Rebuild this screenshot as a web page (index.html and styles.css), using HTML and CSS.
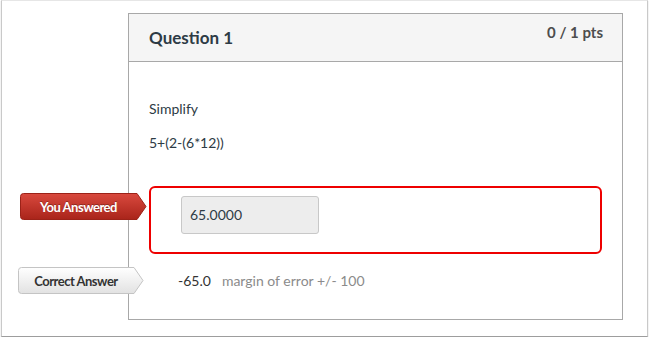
FILE: index.html
```html
<!DOCTYPE html>
<html>
<head>
    <title>Question 1</title>
    <link rel="stylesheet" href="styles.css">
</head>
<body>
    <div class="frame">
        <div class="question">
            <div class="question-header">
                <h2 class="question-title">Question 1</h2>
                <div class="question-points">0 / 1 pts</div>
            </div>
            <div class="question-body">
                <div class="question-text">
                    <p>Simplify</p>
                    <p>5+(2-(6*12))</p>
                </div>

                <div class="answer answer-wrong">
                    <div class="tag tag-red">
                        <svg class="tag-shape" width="127" height="27" viewBox="0 0 127 27">
                            <defs>
                                <linearGradient id="redGrad" x1="0" y1="0" x2="0" y2="1">
                                    <stop offset="0" stop-color="#d9493e"/>
                                    <stop offset="1" stop-color="#a9241a"/>
                                </linearGradient>
                            </defs>
                            <path d="M3.5 0.5 H117 L126 13.5 L117 26.5 H3.5 Q0.5 26.5 0.5 23.5 V3.5 Q0.5 0.5 3.5 0.5 Z" fill="url(#redGrad)" stroke="#9c2218"/>
                        </svg>
                        <span class="tag-label">You Answered</span>
                    </div>
                    <div class="answer-input">65.0000</div>
                </div>

                <div class="answer answer-correct">
                    <div class="tag tag-gray">
                        <svg class="tag-shape" width="126" height="27" viewBox="0 0 126 27">
                            <defs>
                                <linearGradient id="grayGrad" x1="0" y1="0" x2="0" y2="1">
                                    <stop offset="0" stop-color="#ffffff"/>
                                    <stop offset="1" stop-color="#e2e2e2"/>
                                </linearGradient>
                            </defs>
                            <path d="M3.5 0.5 H116 L125 13.5 L116 26.5 H3.5 Q0.5 26.5 0.5 23.5 V3.5 Q0.5 0.5 3.5 0.5 Z" fill="url(#grayGrad)" stroke="#c4c4c4"/>
                        </svg>
                        <span class="tag-label">Correct Answer</span>
                    </div>
                    <span class="answer-value">-65.0</span>
                    <span class="answer-margin">margin of error +/- 100</span>
                </div>
            </div>
        </div>
    </div>
</body>
</html>
```

FILE: styles.css
```css
body {
    font-family: Lato, "Open Sans", sans-serif;
    background-color: #fff;
    margin: 0;
    padding: 0;
    color: #2d3b45;
}

.frame {
    width: 645px;
    height: 335px;
    margin-left: 1px;
    border: 1px solid #c9c9c9;
    border-top-color: #e6e6e6;
    border-bottom-color: #9d9d9d;
    box-shadow: 0 1px 1px rgba(0, 0, 0, 0.25);
    background: #fff;
}

.question {
    width: 493px;
    margin: 12px 0 0 126px;
    border: 1px solid #a8a8a8;
}

.question-header {
    display: flex;
    justify-content: space-between;
    align-items: flex-start;
    height: 47px;
    padding: 0 19px 0 20px;
    background: #f5f5f5;
    border-bottom: 1px solid #a8a8a8;
}

.question-title {
    margin: 13px 0 0;
    font-size: 17px;
    font-weight: bold;
    line-height: 21px;
    color: #2d3b45;
}

.question-points {
    margin-top: 9px;
    font-size: 15px;
    font-weight: bold;
    line-height: 18px;
    color: #4d4d4d;
}

.question-body {
    padding: 37px 20px 25px 20px;
}

.question-text p {
    margin: 0 0 14px;
    font-size: 14px;
    line-height: 20px;
}

.question-text p:last-child {
    margin-bottom: 0;
}

.question-text {
    margin-bottom: 33px;
}

.answer {
    position: relative;
}

.answer-wrong {
    padding: 8px 0 18px 30px;
    border: 2px solid #ee0000;
    border-radius: 6px;
}

.answer-input {
    width: 128px;
    height: 36px;
    padding-left: 8px;
    border: 1px solid #c8c8c8;
    border-radius: 3px;
    background: #ededed;
    font-size: 14px;
    line-height: 36px;
    color: #2d3b45;
}

.answer-correct {
    display: flex;
    align-items: center;
    height: 27px;
    margin-top: 13px;
    padding-left: 29px;
    font-size: 14px;
}

.answer-value {
    color: #333;
}

.answer-margin {
    margin-left: 11px;
    color: #8b8b8b;
}

.tag {
    position: absolute;
    height: 27px;
    display: flex;
    align-items: center;
}

.tag-shape {
    position: absolute;
    left: 0;
    top: 0;
}

.tag-label {
    position: relative;
    font-size: 13px;
    font-weight: bold;
    letter-spacing: -0.5px;
}

.tag-red {
    left: -131px;
    top: 5px;
    width: 117px;
    justify-content: center;
}

.tag-red .tag-label {
    color: #fff;
    text-shadow: 0 -1px 0 rgba(0, 0, 0, 0.3);
}

.tag-gray {
    left: -131px;
    top: 0;
    width: 116px;
    justify-content: center;
}

.tag-gray .tag-label {
    color: #333;
}
```
